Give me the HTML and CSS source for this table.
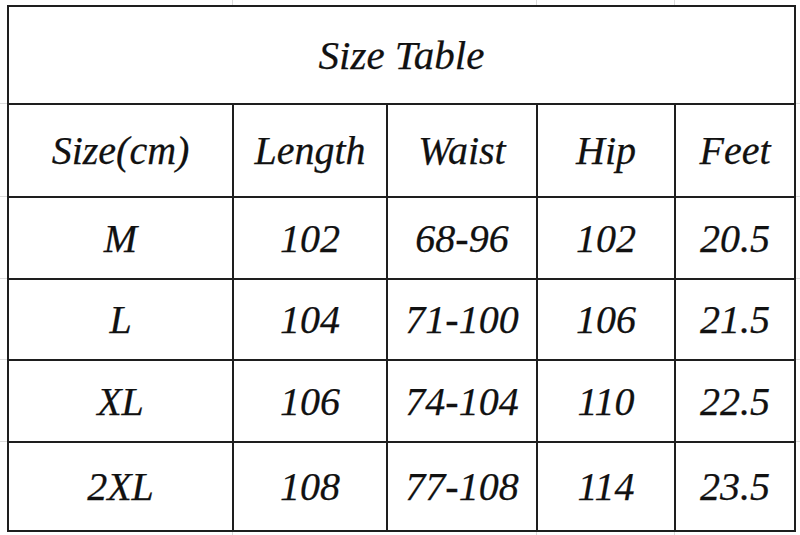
FILE: index.html
```html
<!DOCTYPE html>
<html lang="en">
<head>
<meta charset="utf-8">
<title>Size Table</title>
<link rel="stylesheet" href="styles.css">
</head>
<body>
<div class="sheet">
  <div class="size-table">
    <div class="cell title">Size Table</div>
    <div class="cell">Size(cm)</div>
    <div class="cell">Length</div>
    <div class="cell">Waist</div>
    <div class="cell">Hip</div>
    <div class="cell">Feet</div>

    <div class="cell">M</div>
    <div class="cell">102</div>
    <div class="cell">68-96</div>
    <div class="cell">102</div>
    <div class="cell">20.5</div>

    <div class="cell">L</div>
    <div class="cell">104</div>
    <div class="cell">71-100</div>
    <div class="cell">106</div>
    <div class="cell">21.5</div>

    <div class="cell">XL</div>
    <div class="cell">106</div>
    <div class="cell">74-104</div>
    <div class="cell">110</div>
    <div class="cell">22.5</div>

    <div class="cell">2XL</div>
    <div class="cell">108</div>
    <div class="cell">77-108</div>
    <div class="cell">114</div>
    <div class="cell">23.5</div>
  </div>
</div>
</body>
</html>
```
FILE: styles.css
```css
html, body {
  margin: 0;
  padding: 0;
  width: 800px;
  height: 535px;
  overflow: hidden;
  background: #ffffff;
}

.sheet {
  width: 800px;
  height: 535px;
  box-sizing: border-box;
  padding: 5px 0 0 7px;
  background-color: #ffffff;
  background-image:
    linear-gradient(#dcdcdc, #dcdcdc),
    linear-gradient(#dcdcdc, #dcdcdc),
    linear-gradient(#dcdcdc, #dcdcdc),
    linear-gradient(#dcdcdc, #dcdcdc),
    linear-gradient(#dcdcdc, #dcdcdc),
    linear-gradient(#dcdcdc, #dcdcdc),
    linear-gradient(#dcdcdc, #dcdcdc),
    linear-gradient(#dcdcdc, #dcdcdc);
  background-repeat: no-repeat;
  background-size:
    1px 100%, 1px 100%, 1px 100%,
    100% 1px, 100% 1px, 100% 1px, 100% 1px, 100% 1px;
  background-position:
    232px 0, 536px 0, 674px 0,
    0 103px, 0 196px, 0 278px, 0 359px, 0 441px;
}

.size-table {
  display: grid;
  grid-template-columns: 223px 152px 148px 136px 118px;
  grid-template-rows: 96px 91px 80px 79px 80px 87px;
  gap: 2px;
  padding: 2px;
  width: max-content;
  background: #1e1e1e;
}

.cell {
  background: #ffffff;
  display: flex;
  align-items: center;
  justify-content: center;
  font-family: "Liberation Serif", "Times New Roman", serif;
  font-style: italic;
  font-size: 40px;
  color: #111111;
  -webkit-text-stroke: 0.25px #111111;
  white-space: nowrap;
}

.title {
  grid-column: 1 / -1;
  font-size: 41px;
}
```
